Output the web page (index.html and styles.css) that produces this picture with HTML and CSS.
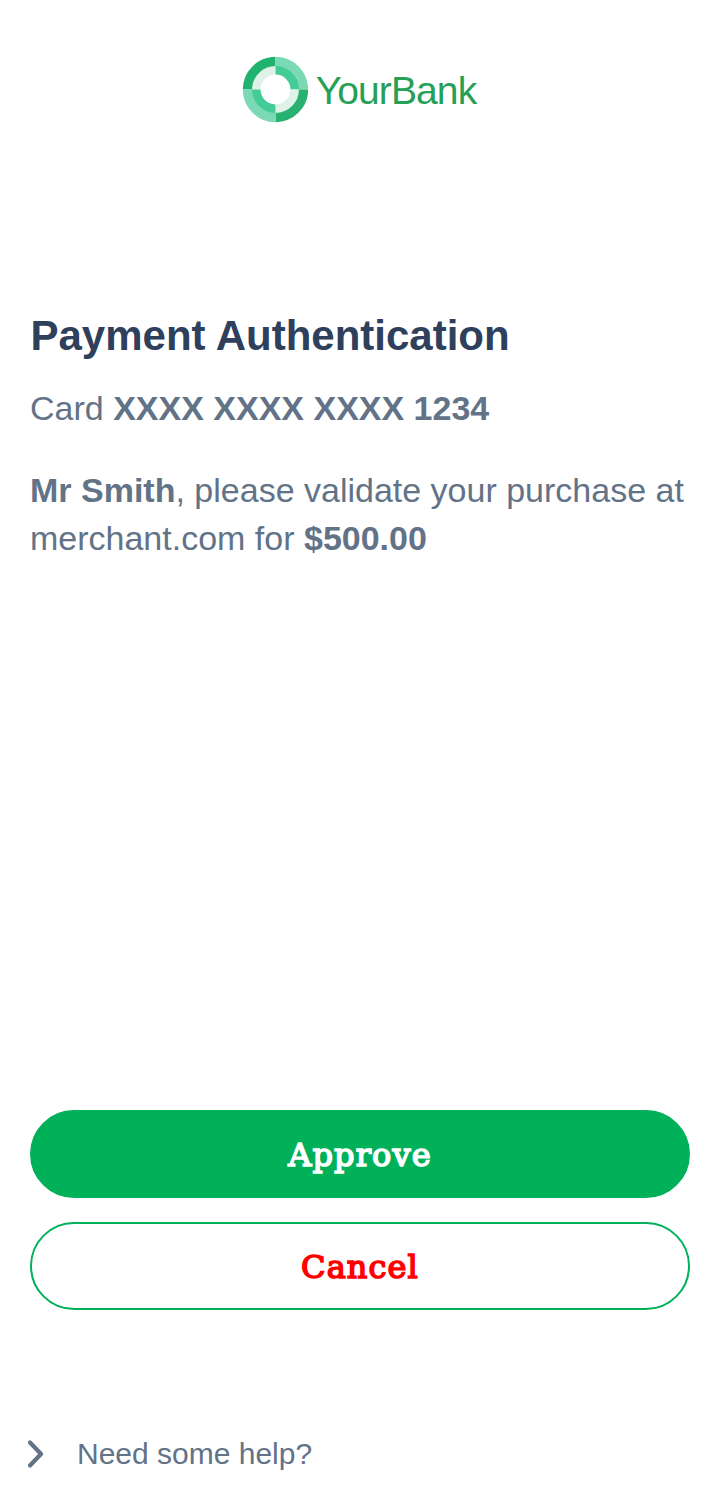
FILE: index.html
```html
<!DOCTYPE html>
<html lang="en">
<head>
<meta charset="utf-8">
<title>Payment Authentication</title>
<link rel="stylesheet" href="styles.css">
</head>
<body>
<main class="page">
  <header class="brand">
    <svg class="logo" viewBox="-33.500 -32.500 66 66" aria-hidden="true">
      <g fill="none" stroke-width="10">
        <path stroke="#20b26f" d="M-27.700 0A27.700 27.700 0 0 1 0-27.700"/>
        <path stroke="#7cd9b5" d="M0-27.700A27.700 27.700 0 0 1 27.700 0"/>
        <path stroke="#29b170" d="M27.700 0A27.700 27.700 0 0 1 0 27.700"/>
        <path stroke="#7cd9b5" d="M0 27.700A27.700 27.700 0 0 1-27.700 0"/>
      </g>
      <g fill="none" stroke-width="8.500">
        <path stroke="#def2e8" d="M-19.2 0A19.2 19.2 0 0 1 0-19.2"/>
        <path stroke="#43cc96" d="M0-19.2A19.2 19.2 0 0 1 19.2 0"/>
        <path stroke="#def2e8" d="M19.2 0A19.2 19.2 0 0 1 0 19.2"/>
        <path stroke="#43cc96" d="M0 19.2A19.2 19.2 0 0 1-19.2 0"/>
      </g>
    </svg>
    <span class="brand-name">YourBank</span>
  </header>
  <section class="details">
    <h1 class="title">Payment Authentication</h1>
    <p class="card">Card <b class="number">XXXX XXXX XXXX 1234</b></p>
    <p class="message"><b>Mr Smith</b>, please validate your purchase at<br>merchant.com for <b class="amount">$500.00</b></p>
  </section>
  <div class="actions">
    <button class="button approve">Approve</button>
    <button class="button cancel">Cancel</button>
  </div>
  <footer class="help">
    <svg class="chevron" viewBox="0 0 16 28" aria-hidden="true"><path d="M2 2.500L13 14L2 25.500" fill="none" stroke="#627387" stroke-width="4.200" stroke-linecap="round" stroke-linejoin="round"/></svg>
    <span class="help-text">Need some help?</span>
  </footer>
</main>
</body>
</html>
```
FILE: styles.css
```css
* { box-sizing: border-box; }
body { margin: 0; background: #fff; font-family: "Liberation Sans", Arial, sans-serif; color: #627387; }
.page { height: 1508px; padding: 57px 30px 0; display: flex; flex-direction: column; }
.brand { height: 66px; padding-right: 2px; display: flex; justify-content: center; align-items: center; gap: 8px; }
.logo { width: 66px; height: 66px; }
.brand-name { color: #27a057; font-size: 39px; line-height: 66px; letter-spacing: -0.9px; padding-top: 2px; }
.details { margin-top: 187px; height: 800px; padding-top: 1px; white-space: nowrap; }
.title { margin: 0; padding-left: 0.5px; font-size: 42px; line-height: 50px; color: #2e405b; }
.card { margin: 23px 0 0; font-size: 34px; line-height: 48px; }
.message { margin: 34px 0 0; font-size: 34px; line-height: 48px; }
.actions { display: flex; flex-direction: column; gap: 24px; }
.button { width: 100%; height: 88px; padding: 1px 0 0; border: 2px solid #00b159; border-radius: 44px; font: 32px/82px "DejaVu Serif", serif; letter-spacing: 1.1px; -webkit-text-stroke: 1.6px currentColor; }
.approve { background: #00b159; color: #fff; }
.cancel { background: #fff; color: #f00; }
.help { margin-top: 120px; height: 48px; display: flex; align-items: center; }
.chevron { width: 16px; height: 28px; margin: 0 33px 0 -2px; }
.help-text { font-size: 30px; line-height: 48px; }
```
